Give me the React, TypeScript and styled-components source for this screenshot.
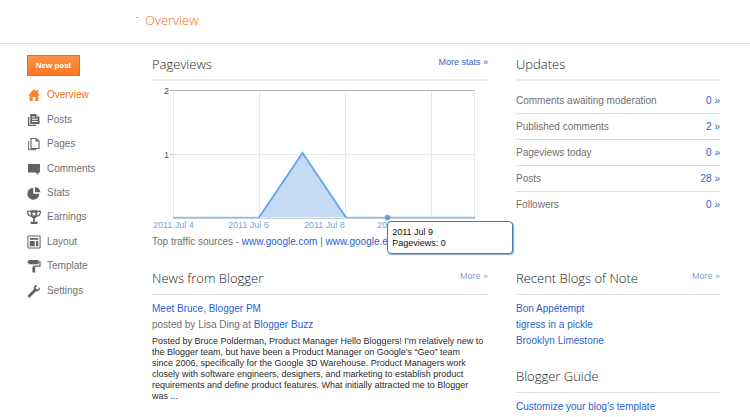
import React from "react";
import styled, { createGlobalStyle } from "styled-components";

const GlobalStyle = createGlobalStyle`
  *, *::before, *::after { box-sizing: border-box; }
  body {
    margin: 0;
    background: #fff;
    color: #707070;
    font: 10px/16px "Liberation Sans", Arial, sans-serif;
  }
  h1, h2, p, ul { margin: 0; padding: 0; }
  ul { list-style: none; }
`;

const Header = styled.header`
  display: flex;
  align-items: center;
  gap: 7px;
  height: 44px;
  padding: 0 30px 3px 136px;
  border-bottom: 1px solid #e2e2e2;
`;

const Tick = styled.span`
  width: 2px;
  height: 1px;
  margin-bottom: 6px;
  background: #aaa;
`;

const PageTitle = styled.h1`
  font: 300 13px/20px "Open Sans", sans-serif;
  color: #f56a00;
`;

const Page = styled.div`
  display: grid;
  grid-template-columns: 97px minmax(0, 1fr);
  gap: 28px;
  padding: 10px 30px 0 27px;
`;

const Sidebar = styled.aside`
  padding-top: 1px;
`;

const NewPost = styled.button`
  display: block;
  width: 53px;
  height: 21px;
  padding: 0;
  border: 1px solid #f0681a;
  background: linear-gradient(#ff9147, #fb7722);
  color: #fff;
  font: bold 8px/19px "Liberation Sans", Arial, sans-serif;
  white-space: nowrap;
  cursor: pointer;
`;

const NavList = styled.ul`
  display: grid;
  grid-auto-rows: 1fr;
  height: 220px;
  margin-top: 7px;
`;

const NavLink = styled.a<{ $active?: boolean }>`
  display: flex;
  align-items: center;
  gap: 6px;
  height: 100%;
  color: ${(p) => (p.$active ? "#f57010" : "#707070")};
  text-decoration: none;

  svg {
    width: 14px;
    height: 14px;
    color: ${(p) => (p.$active ? "#fb8530" : "#636363")};
  }
`;

const Panels = styled.main`
  display: grid;
  grid-template-columns: minmax(0, 1fr) 204px;
  gap: 18px 28px;
  align-items: start;
`;

const Stack = styled.div`
  display: grid;
  gap: 17px;
`;

const SectionHead = styled.div<{ $heavy?: boolean }>`
  display: flex;
  justify-content: space-between;
  height: 27px;
  border-bottom: ${(p) => (p.$heavy ? "2px solid #ededed" : "1px solid #dedede")};
`;

const SectionTitle = styled.h2`
  font: 300 13px/20px "Open Sans", sans-serif;
  color: #1c1c1c;
`;

const Link = styled.a`
  color: #2a5fd0;
  text-decoration: none;
`;

const MoreLink = styled(Link)<{ $soft?: boolean }>`
  font-size: 9px;
  color: ${(p) => (p.$soft ? "#7d9fdc" : "#2a5fd0")};
`;

const ChartBox = styled.div`
  position: relative;
  margin-top: 5px;

  svg {
    display: block;
    width: 100%;
    height: auto;
  }
`;

const Tooltip = styled.div`
  position: absolute;
  left: 70%;
  top: 135px;
  width: 126px;
  height: 33px;
  padding: 5px 4px;
  border: 1px solid #3c7fbf;
  border-radius: 4px;
  box-shadow: 1px 1px 1px #8aa9c6;
  background: #fff;
  color: #111;
  font-size: 9px;
  line-height: 11px;
`;

const Traffic = styled.p`
  padding-top: 2px;
  white-space: nowrap;
`;

const UpdateRows = styled.ul`
  padding-top: 7px;
`;

const UpdateRow = styled.li`
  display: flex;
  justify-content: space-between;
  height: 26px;
  line-height: 25px;
  border-bottom: 1px solid #d9d9d9;

  &:last-child { border-bottom-color: transparent; }
`;

const LinkList = styled.ul`
  padding-top: 6px;
`;

const News = styled.article`
  padding-top: 6px;
`;

const Excerpt = styled.p`
  font-size: 9px;
  line-height: 11px;
  margin-top: 3px;
  color: #2b2b2b;
`;

const icons: Record<string, React.ReactNode> = {
  Overview: <path d="M7 1 1 7.4h1.6V13h3.1V9h2.6v4h3.1V7.4H13L11.2 5.5V1.8H9.4v1.8z" />,
  Posts: (
    <>
      <path d="M1 4v9h8v-1.3H2.3V4z" />
      <path fillRule="evenodd" d="M3.3 1h6L12.5 4v7H3.3zM5 3.6v1h3v-1zm0 2.2v.9h5.8v-.9zM5 8v.9h5.8V8z" />
      <path d="M9 1v3.3h3.5" fill="#bbb" />
    </>
  ),
  Pages: (
    <>
      <path d="M1 4v9.2h8V12H2.2V4z" opacity=".8" />
      <path d="M4 1.5h5L12 4v7.5H4z" fill="none" stroke="currentColor" strokeWidth="1.1" />
      <path d="M8.6 1.5V4.4H12z" />
    </>
  ),
  Comments: <path d="M1 2h12v8.4h-1.7V13L8.4 10.4H1z" />,
  Stats: (
    <>
      <path d="M6.3 1.7V7.7h6A6 6 0 1 1 6.3 1.7z" />
      <path d="M8 1a5.5 5.5 0 0 1 5.3 5.3H8z" />
    </>
  ),
  Earnings: (
    <>
      <path d="M3.4 .2h7.200C10.600 4.800 9.800 7.400 7.800 8.600v3.200h2.700V14h-7v-2.200h2.700V8.600C4.200 7.400 3.400 4.800 3.400 .2z" />
      <path d="M3.600 1.300H.5c0 3.200 1.700 4.800 4.300 5.100M10.400 1.300h3.100c0 3.200-1.700 4.800-4.300 5.100" fill="none" stroke="currentColor" strokeWidth="1.200" />
      <path d="m7 1.600.7 1.400 1.500.1-1.100 1.100.3 1.500L7 4.900l-1.400.8.3-1.500-1.100-1.100L6.300 3z" fill="#fff" />
    </>
  ),
  Layout: (
    <>
      <path d="M.9 1h12.200v12H.9z" fill="none" stroke="currentColor" strokeWidth="1" />
      <path d="M2.700 3h8.600v1.800H2.700zM2.700 6h5v5.300h-5zM9 6h2.300v5.300H9z" />
    </>
  ),
  Template: (
    <>
      <path d="M1.500 1h10v4.200h-10zM.5 2.200h1v1.600h-1z" />
      <path d="M11.500 2.800H13v4.400H6.700V13" fill="none" stroke="currentColor" strokeWidth="1.200" />
      <path d="M5.400 8h2.800v5.500H5.400z" />
    </>
  ),
  Settings: <path d="M12.900 3.300 10.800 5.400 9 5l-.4-1.800 2.100-2.100C8.700.5 6.500 1.900 6.700 4.300L6.800 5.500 1.200 10.900a1.300 1.300 0 0 0 2 2L8.800 7.400C11.200 8 13.700 5.900 12.900 3.300z" />,
};

const updates: [string, number][] = [
  ["Comments awaiting moderation", 0],
  ["Published comments", 2],
  ["Pageviews today", 0],
  ["Posts", 28],
  ["Followers", 0],
];

const blogs = ["Bon Appétempt", "tigress in a pickle", "Brooklyn Limestone"];

function PageviewsChart() {
  return (
    <ChartBox>
      <svg viewBox="0 0 336 146" role="img" aria-label="Pageviews by day" fontFamily="Liberation Sans, Arial, sans-serif">
        <path d="M21.500 5V131M107.500 5V131M193.500 5V131M279.500 5V131M322.500 5V131M22 68.500H323" stroke="#e9e9e9" fill="none" />
        <path d="M18 4.500H323" stroke="#b5b5b5" strokeWidth="1.200" />
        <path d="M18 68.500h4" stroke="#bbb" />
        <path d="M21 132.500H323" stroke="#cfcfcf" />
        <path d="M107 131.500 150.500 67 194 131.500z" fill="#c6dcf5" />
        <path d="M21 131.500H107M194 131.500H323" fill="none" stroke="#8fc0ee" strokeWidth="1.300" />
        <path d="M107 131.500 150.500 67 194 131.500" fill="none" stroke="#69a9e8" strokeWidth="2" />
        <circle cx="235.500" cy="131.500" r="2.700" fill="#5c9fe0" />
        <g fontSize="9" fill="#555" textAnchor="end">
          <text x="17" y="8">2</text>
          <text x="17" y="72">1</text>
        </g>
        <g fontSize="9" fill="#69a9e8">
          <text x="1" y="142">2011 Jul 4</text>
          <text x="76" y="142">2011 Jul 6</text>
          <text x="152" y="142">2011 Jul 8</text>
          <text x="225" y="142">2011 Jul 10</text>
        </g>
      </svg>
      <Tooltip role="tooltip">
        2011 Jul 9
        <br />
        Pageviews: 0
      </Tooltip>
    </ChartBox>
  );
}

export default function App() {
  return (
    <>
      <GlobalStyle />
      <Header>
        <Tick />
        <PageTitle>Overview</PageTitle>
      </Header>
      <Page>
        <Sidebar>
          <NewPost type="button">New post</NewPost>
          <nav aria-label="Blog">
            <NavList>
              {Object.keys(icons).map((name) => (
                <li key={name}>
                  <NavLink href="#" $active={name === "Overview"}>
                    <svg viewBox="0 0 14 14" fill="currentColor" aria-hidden="true">
                      {icons[name]}
                    </svg>
                    {name}
                  </NavLink>
                </li>
              ))}
            </NavList>
          </nav>
        </Sidebar>
        <Panels>
          <section>
            <SectionHead $heavy>
              <SectionTitle>Pageviews</SectionTitle>
              <MoreLink href="#">More stats »</MoreLink>
            </SectionHead>
            <PageviewsChart />
            <Traffic>
              Top traffic sources - <Link href="#">www.google.com</Link> | <Link href="#">www.google.es</Link>
            </Traffic>
          </section>
          <section>
            <SectionHead $heavy>
              <SectionTitle>Updates</SectionTitle>
            </SectionHead>
            <UpdateRows>
              {updates.map(([label, count]) => (
                <UpdateRow key={label}>
                  <span>{label}</span>
                  <Link href="#">{count} »</Link>
                </UpdateRow>
              ))}
            </UpdateRows>
          </section>
          <section>
            <SectionHead>
              <SectionTitle>News from Blogger</SectionTitle>
              <MoreLink href="#" $soft>More »</MoreLink>
            </SectionHead>
            <News>
              <p><Link href="#">Meet Bruce, Blogger PM</Link></p>
              <p>posted by Lisa Ding at <Link href="#">Blogger Buzz</Link></p>
              <Excerpt>
                Posted by Bruce Polderman, Product Manager Hello Bloggers! I’m relatively new to the Blogger
                team, but have been a Product Manager on Google’s “Geo” team since&nbsp;2006, specifically for
                the Google 3D Warehouse. Product Managers work closely with software engineers, designers, and
                marketing to establish product requirements and define product features. What initially
                attracted me to Blogger was&nbsp;...
              </Excerpt>
            </News>
          </section>
          <Stack>
            <section>
              <SectionHead>
                <SectionTitle>Recent Blogs of Note</SectionTitle>
                <MoreLink href="#" $soft>More »</MoreLink>
              </SectionHead>
              <LinkList>
                {blogs.map((blog) => (
                  <li key={blog}><Link href="#">{blog}</Link></li>
                ))}
              </LinkList>
            </section>
            <section>
              <SectionHead>
                <SectionTitle>Blogger Guide</SectionTitle>
              </SectionHead>
              <LinkList>
                <li><Link href="#">Customize your blog's template</Link></li>
              </LinkList>
            </section>
          </Stack>
        </Panels>
      </Page>
    </>
  );
}
